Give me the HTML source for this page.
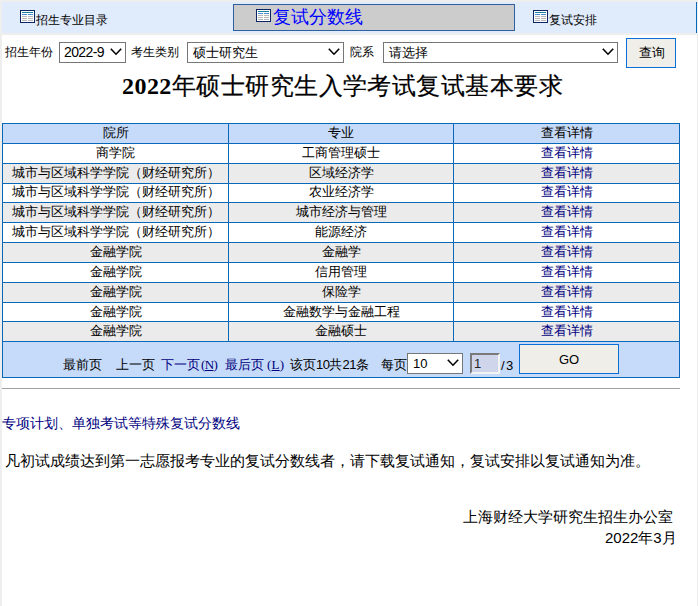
<!DOCTYPE html>
<html><head><meta charset="utf-8">
<style>
html,body{margin:0;padding:0;}
body{width:698px;height:606px;position:relative;overflow:hidden;background:#fff;font-family:"Liberation Sans",sans-serif;color:#000;}
.abs{position:absolute;}
.t{position:absolute;white-space:nowrap;line-height:1;}
svg.ic{position:absolute;width:15px;height:13px;}
table.g{position:absolute;left:2px;top:123px;width:678px;border-collapse:collapse;table-layout:fixed;font-size:13px;}
table.g td{border:1px solid #0a68b8;text-align:center;padding:0;height:19px;line-height:19px;white-space:nowrap;overflow:hidden;}
table.g tr.h td{background:#c6dbf9;}
table.g tr.w td{background:#fff;}
table.g tr.k td{background:#ebebeb;}
table.g a{color:#000080;text-decoration:none;}
.c{position:absolute;white-space:nowrap;line-height:13px;font-size:13px;text-align:center;}
.sel{position:absolute;box-sizing:border-box;border:1px solid #767676;background:#fff;font-size:13px;}
.btn{position:absolute;box-sizing:border-box;border:1px solid #0a6fd6;background:#efeee8;text-align:center;font-size:13px;}
</style></head>
<body>
<!-- page frame -->
<div class="abs" style="left:0;top:0;width:698px;height:2px;background:#eee"></div>
<div class="abs" style="left:0;top:0;width:2px;height:606px;background:#eee"></div>
<div class="abs" style="left:697px;top:0;width:1px;height:606px;background:#eee"></div>
<!-- tab bar -->
<div class="abs" style="left:2px;top:2px;width:694px;height:31px;background:#e0ebfb"></div>
<div class="abs" style="left:696px;top:2px;width:1px;height:31px;background:#0a68b8"></div>
<div class="abs" style="left:2px;top:33px;width:695px;height:2px;background:#eee"></div>

<svg class="ic" style="left:20px;top:10px" viewBox="0 0 15 13"><rect x="0.5" y="0.5" width="14" height="12" fill="#fff" stroke="#0a2464"/><path d="M2 2.5H13" stroke="#17809a"/><path d="M2 4.5H7M8 4.5H13" stroke="#4a8ad8"/><path d="M2 6.5H7M8 6.5H13M2 8.5H7M8 8.5H13M2 10.5H7M8 10.5H13" stroke="#b8b8b8"/></svg>
<div class="t" style="left:36px;top:14px;font-size:12px;">招生专业目录</div>

<div class="abs" style="left:233px;top:4px;width:280px;height:25px;border:1px solid #2f5f9c;background:#cccccc"></div>
<svg class="ic" style="left:256px;top:9px" viewBox="0 0 15 13"><rect x="0.5" y="0.5" width="14" height="12" fill="#fff" stroke="#0a2464"/><path d="M2 2.5H13" stroke="#17809a"/><path d="M2 4.5H7M8 4.5H13" stroke="#4a8ad8"/><path d="M2 6.5H7M8 6.5H13M2 8.5H7M8 8.5H13M2 10.5H7M8 10.5H13" stroke="#b8b8b8"/></svg>
<div class="t" style="left:273px;top:8px;font-size:18px;color:#0000ff">复试分数线</div>

<svg class="ic" style="left:533px;top:10px" viewBox="0 0 15 13"><rect x="0.5" y="0.5" width="14" height="12" fill="#fff" stroke="#0a2464"/><path d="M2 2.5H13" stroke="#17809a"/><path d="M2 4.5H7M8 4.5H13" stroke="#4a8ad8"/><path d="M2 6.5H7M8 6.5H13M2 8.5H7M8 8.5H13M2 10.5H7M8 10.5H13" stroke="#b8b8b8"/></svg>
<div class="t" style="left:549px;top:14px;font-size:12px;">复试安排</div>

<!-- form row -->
<div class="t" style="left:5px;top:46px;font-size:12px;">招生年份</div>
<div class="sel" style="left:59px;top:42px;width:67px;height:21px;"><span class="t" style="left:4px;top:2px;font-size:14px;letter-spacing:-0.6px">2022-9</span></div>
<svg class="abs" style="left:110px;top:48px" width="12" height="8" viewBox="0 0 12 8"><path d="M0.8 0.8L6 6.2L11.2 0.8" stroke="#000" stroke-width="1.6" fill="none"/></svg>
<div class="t" style="left:131px;top:46px;font-size:12px;">考生类别</div>
<div class="sel" style="left:187px;top:42px;width:157px;height:21px;"><span class="t" style="left:5px;top:3px">硕士研究生</span></div>
<svg class="abs" style="left:328px;top:48px" width="12" height="8" viewBox="0 0 12 8"><path d="M0.8 0.8L6 6.2L11.2 0.8" stroke="#000" stroke-width="1.6" fill="none"/></svg>
<div class="t" style="left:350px;top:46px;font-size:12px;">院系</div>
<div class="sel" style="left:383px;top:42px;width:235px;height:21px;"><span class="t" style="left:5px;top:3px">请选择</span></div>
<svg class="abs" style="left:602px;top:48px" width="12" height="8" viewBox="0 0 12 8"><path d="M0.8 0.8L6 6.2L11.2 0.8" stroke="#000" stroke-width="1.6" fill="none"/></svg>
<div class="btn" style="left:626px;top:38px;width:50px;height:30px;"><span class="t" style="left:12px;top:7px">查询</span></div>

<div class="t" style="left:122px;top:74px;font-size:24px;font-family:'Liberation Serif',serif;letter-spacing:0.45px"><b>2022</b><span style="-webkit-text-stroke:0.2px #000">年硕士研究生入学考试复试基本要求</span></div>

<div class="abs" style="left:3px;top:124px;width:676px;height:19px;background:#c6dbf9"></div>
<div class="abs" style="left:3px;top:144px;width:676px;height:19px;background:#fff"></div>
<div class="abs" style="left:3px;top:164px;width:676px;height:19px;background:#ebebeb"></div>
<div class="abs" style="left:3px;top:184px;width:676px;height:18px;background:#fff"></div>
<div class="abs" style="left:3px;top:203px;width:676px;height:19px;background:#ebebeb"></div>
<div class="abs" style="left:3px;top:223px;width:676px;height:19px;background:#fff"></div>
<div class="abs" style="left:3px;top:243px;width:676px;height:19px;background:#ebebeb"></div>
<div class="abs" style="left:3px;top:263px;width:676px;height:19px;background:#fff"></div>
<div class="abs" style="left:3px;top:283px;width:676px;height:19px;background:#ebebeb"></div>
<div class="abs" style="left:3px;top:303px;width:676px;height:18px;background:#fff"></div>
<div class="abs" style="left:3px;top:322px;width:676px;height:19px;background:#ebebeb"></div>
<div class="abs" style="left:2px;top:123px;width:678px;height:1px;background:#0a68b8"></div>
<div class="abs" style="left:2px;top:143px;width:678px;height:1px;background:#0a68b8"></div>
<div class="abs" style="left:2px;top:163px;width:678px;height:1px;background:#0a68b8"></div>
<div class="abs" style="left:2px;top:183px;width:678px;height:1px;background:#0a68b8"></div>
<div class="abs" style="left:2px;top:202px;width:678px;height:1px;background:#0a68b8"></div>
<div class="abs" style="left:2px;top:222px;width:678px;height:1px;background:#0a68b8"></div>
<div class="abs" style="left:2px;top:242px;width:678px;height:1px;background:#0a68b8"></div>
<div class="abs" style="left:2px;top:262px;width:678px;height:1px;background:#0a68b8"></div>
<div class="abs" style="left:2px;top:282px;width:678px;height:1px;background:#0a68b8"></div>
<div class="abs" style="left:2px;top:302px;width:678px;height:1px;background:#0a68b8"></div>
<div class="abs" style="left:2px;top:321px;width:678px;height:1px;background:#0a68b8"></div>
<div class="abs" style="left:2px;top:341px;width:678px;height:1px;background:#0a68b8"></div>
<div class="abs" style="left:2px;top:123px;width:1px;height:218px;background:#0a68b8"></div>
<div class="abs" style="left:228px;top:123px;width:1px;height:218px;background:#0a68b8"></div>
<div class="abs" style="left:453px;top:123px;width:1px;height:218px;background:#0a68b8"></div>
<div class="abs" style="left:679px;top:123px;width:1px;height:218px;background:#0a68b8"></div>
<div class="c" style="left:3px;top:126px;width:225px">院所</div>
<div class="c" style="left:229px;top:126px;width:224px">专业</div>
<div class="c" style="left:454px;top:126px;width:225px;color:#000">查看详情</div>
<div class="c" style="left:3px;top:146px;width:225px">商学院</div>
<div class="c" style="left:229px;top:146px;width:224px">工商管理硕士</div>
<div class="c" style="left:454px;top:146px;width:225px;color:#000080">查看详情</div>
<div class="c" style="left:3px;top:166px;width:225px">城市与区域科学学院（财经研究所）</div>
<div class="c" style="left:229px;top:166px;width:224px">区域经济学</div>
<div class="c" style="left:454px;top:166px;width:225px;color:#000080">查看详情</div>
<div class="c" style="left:3px;top:185px;width:225px">城市与区域科学学院（财经研究所）</div>
<div class="c" style="left:229px;top:185px;width:224px">农业经济学</div>
<div class="c" style="left:454px;top:185px;width:225px;color:#000080">查看详情</div>
<div class="c" style="left:3px;top:205px;width:225px">城市与区域科学学院（财经研究所）</div>
<div class="c" style="left:229px;top:205px;width:224px">城市经济与管理</div>
<div class="c" style="left:454px;top:205px;width:225px;color:#000080">查看详情</div>
<div class="c" style="left:3px;top:225px;width:225px">城市与区域科学学院（财经研究所）</div>
<div class="c" style="left:229px;top:225px;width:224px">能源经济</div>
<div class="c" style="left:454px;top:225px;width:225px;color:#000080">查看详情</div>
<div class="c" style="left:3px;top:245px;width:225px">金融学院</div>
<div class="c" style="left:229px;top:245px;width:224px">金融学</div>
<div class="c" style="left:454px;top:245px;width:225px;color:#000080">查看详情</div>
<div class="c" style="left:3px;top:265px;width:225px">金融学院</div>
<div class="c" style="left:229px;top:265px;width:224px">信用管理</div>
<div class="c" style="left:454px;top:265px;width:225px;color:#000080">查看详情</div>
<div class="c" style="left:3px;top:285px;width:225px">金融学院</div>
<div class="c" style="left:229px;top:285px;width:224px">保险学</div>
<div class="c" style="left:454px;top:285px;width:225px;color:#000080">查看详情</div>
<div class="c" style="left:3px;top:305px;width:225px">金融学院</div>
<div class="c" style="left:229px;top:305px;width:224px">金融数学与金融工程</div>
<div class="c" style="left:454px;top:305px;width:225px;color:#000080">查看详情</div>
<div class="c" style="left:3px;top:324px;width:225px">金融学院</div>
<div class="c" style="left:229px;top:324px;width:224px">金融硕士</div>
<div class="c" style="left:454px;top:324px;width:225px;color:#000080">查看详情</div>
<div class="abs" style="left:2px;top:341px;width:676px;height:35px;border:1px solid #0a68b8;background:#c6dbf9"></div>
<div class="t" style="left:63px;top:358px;font-size:13px;">最前页</div>
<div class="t" style="left:116px;top:358px;font-size:13px;">上一页</div>
<div class="t" style="left:161px;top:358px;font-size:13px;color:#000080">下一页</div><div class="t" style="left:201px;top:358px;font-size:13px;color:#000080;font-family:'Liberation Serif',serif;letter-spacing:-0.6px">(<u>N</u>)</div>
<div class="t" style="left:225px;top:358px;font-size:13px;color:#000080">最后页</div><div class="t" style="left:267px;top:358px;font-size:13px;color:#000080;font-family:'Liberation Serif',serif;letter-spacing:0.2px">(<u>L</u>)</div>
<div class="t" style="left:290px;top:358px;font-size:13px;">该页<span style="letter-spacing:-0.5px">10</span>共<span style="letter-spacing:-0.5px">21</span>条</div>
<div class="t" style="left:381px;top:358px;font-size:13px;">每页</div>
<div class="sel" style="left:407px;top:353px;width:56px;height:21px;"><span class="t" style="left:5px;top:3px">10</span></div>
<svg class="abs" style="left:447px;top:359px" width="12" height="8" viewBox="0 0 12 8"><path d="M0.8 0.8L6 6.2L11.2 0.8" stroke="#000" stroke-width="1.6" fill="none"/></svg>
<div class="abs" style="left:470px;top:353px;width:26px;height:17px;border-style:solid;border-width:2px;border-color:#7a7a7a #f4f4f4 #f4f4f4 #7a7a7a;background:#cfd6ec;font-size:13px;"><span class="t" style="left:2px;top:2px;color:#222">1</span></div>
<div class="t" style="left:501px;top:359px;font-size:13px;">/</div><div class="t" style="left:506px;top:359px;font-size:13px;">3</div>
<div class="btn" style="left:519px;top:344px;width:100px;height:30px;"><span class="t" style="left:39px;top:8px">GO</span></div>

<div class="abs" style="left:2px;top:388px;width:678px;height:1px;background:#a0a0a0"></div>

<div class="t" style="left:2px;top:416px;font-size:14px;color:#000080">专项计划、单独考试等特殊复试分数线</div>
<div class="t" style="left:5px;top:453px;font-size:15px;">凡初试成绩达到第一志愿报考专业的复试分数线者，请下载复试通知，复试安排以复试通知为准。</div>
<div class="t" style="left:463px;top:509px;font-size:15px;">上海财经大学研究生招生办公室</div>
<div class="t" style="left:605px;top:530px;font-size:15px;">2022年3月</div>
</body></html>
